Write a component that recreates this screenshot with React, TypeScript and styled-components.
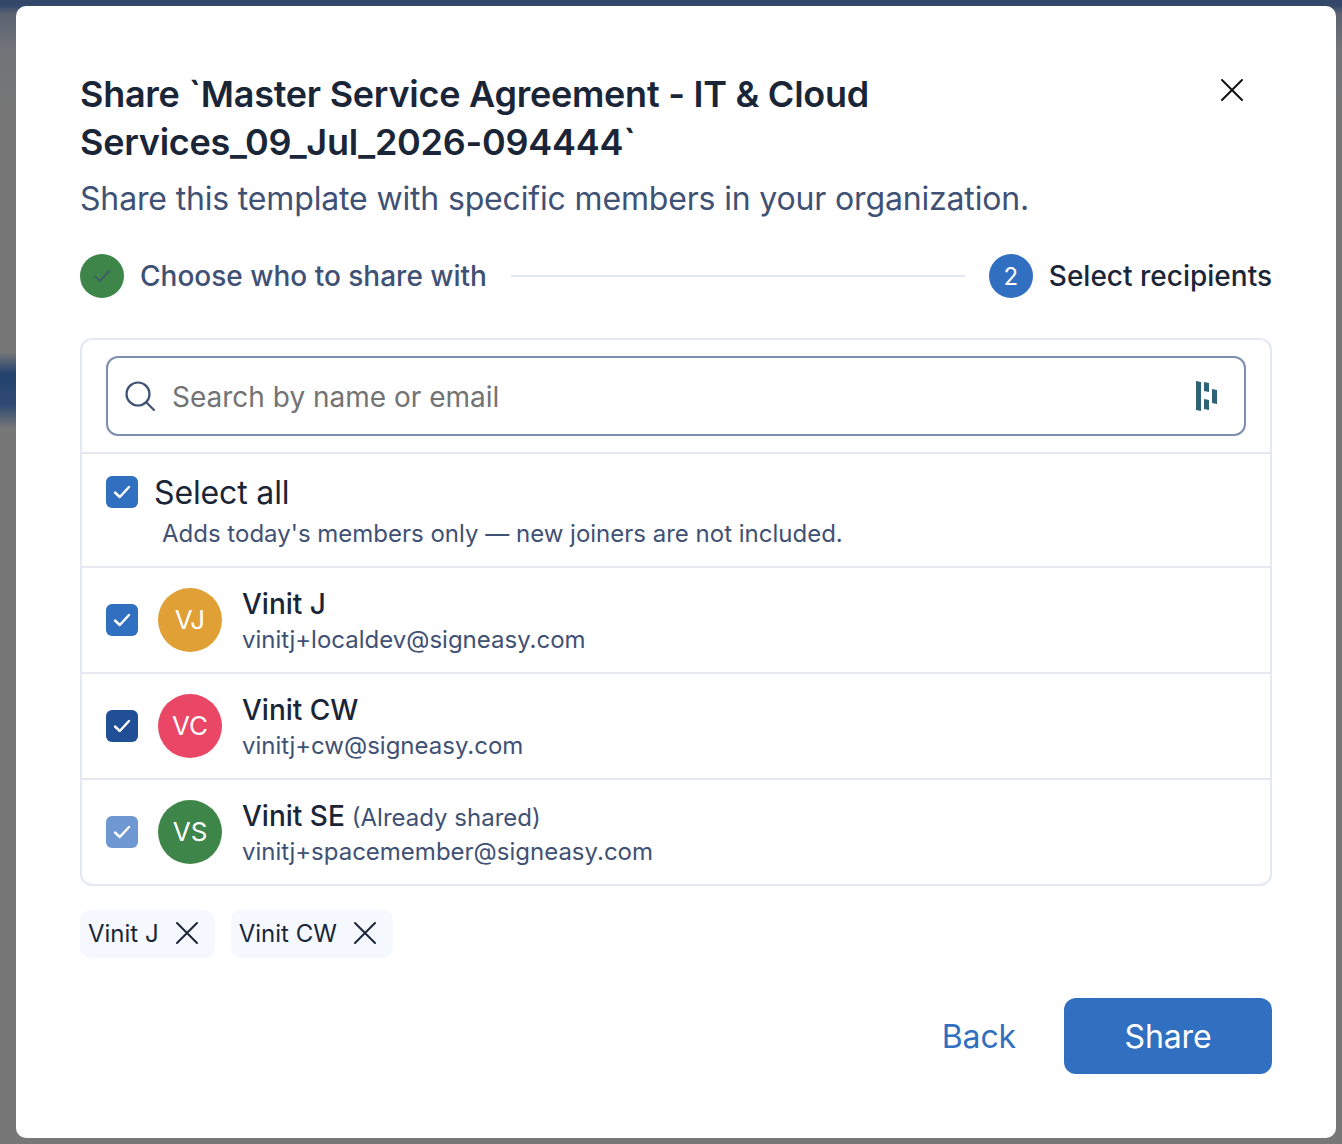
import React from "react";
import styled, { createGlobalStyle } from "styled-components";

const Global = createGlobalStyle`
  html, body { margin: 0; padding: 0; }
  body { font-family: Inter, "Liberation Sans", sans-serif; }
  * { box-sizing: border-box; }
`;

const Backdrop = styled.div`
  width: 1342px;
  height: 1144px;
  padding: 6px 6px 6px 16px;
  overflow: hidden;
  background-color: #777777;
  background-image:
    linear-gradient(180deg, #33476a 0, #33476a 5px, rgba(72, 86, 110, 0.6) 14px, rgba(100, 108, 120, 0.35) 50px, rgba(119, 119, 119, 0) 110px),
    linear-gradient(180deg, rgba(30, 60, 105, 0) 352px, #24426f 374px, #2f4b74 405px, rgba(30, 60, 105, 0) 428px);
  background-size: 100% 100%, 16px 100%;
  background-repeat: no-repeat;
`;

const Modal = styled.div`
  width: 1320px;
  height: 1132px;
  background: #ffffff;
  border-radius: 10px;
  padding: 64px;
  display: flex;
  flex-direction: column;
`;

const Header = styled.div`
  display: flex;
  justify-content: space-between;
  align-items: flex-start;
`;

const Title = styled.h2`
  margin: 0;
  width: 900px;
  font-size: 36px;
  line-height: 48px;
  font-weight: 600;
  letter-spacing: -0.26px;
  color: #1a2638;
`;

const Close = styled.button`
  margin: 6px 26px 0 0;
  padding: 0;
  width: 28px;
  height: 28px;
  border: 0;
  background: none;
  color: #111111;
  display: flex;
  align-items: center;
  justify-content: center;
`;

const Subtitle = styled.p`
  margin: 13px 0 0;
  font-size: 32px;
  line-height: 40px;
  letter-spacing: -0.16px;
  color: #3f5174;
`;

const Stepper = styled.div`
  margin-top: 35px;
  height: 44px;
  display: flex;
  align-items: center;
`;

const StepDot = styled.div<{ $bg: string }>`
  flex: none;
  width: 44px;
  height: 44px;
  border-radius: 50%;
  background: ${(p) => p.$bg};
  color: #ffffff;
  font-size: 24px;
  display: flex;
  align-items: center;
  justify-content: center;
`;

const StepLabel = styled.span<{ $active?: boolean }>`
  flex: none;
  margin-left: 16px;
  font-size: 28px;
  font-weight: 500;
  color: ${(p) => (p.$active ? "#1a2638" : "#3f5174")};
`;

const StepLine = styled.div`
  flex: 1;
  height: 2px;
  margin: 0 24px;
  background: #e4e8f1;
`;

const Panel = styled.div`
  margin-top: 40px;
  height: 548px;
  border: 2px solid #e4e8f1;
  border-radius: 12px;
  display: flex;
  flex-direction: column;
`;

const SearchWrap = styled.div`
  height: 114px;
  flex: none;
  padding: 16px 24px;
  border-bottom: 2px solid #e4e8f1;
`;

const SearchBox = styled.div`
  height: 80px;
  border: 2px solid #7d8fae;
  border-radius: 12px;
  padding: 0 26px 0 16px;
  display: flex;
  align-items: center;
`;

const Placeholder = styled.span`
  flex: 1;
  margin: 2px 0 0 16px;
  font-size: 28px;
  color: #737373;
`;

const SelectAll = styled.div`
  height: 114px;
  flex: none;
  padding: 21px 24px 0;
  border-bottom: 2px solid #e4e8f1;
`;

const SelectAllRow = styled.div`
  display: flex;
  align-items: center;
  height: 34px;
`;

const SelectAllLabel = styled.span`
  margin-left: 16px;
  font-size: 32px;
  letter-spacing: -0.14px;
  color: #1a2638;
`;

const Hint = styled.div`
  margin: 8px 0 0 56px;
  font-size: 24px;
  line-height: 34px;
  color: #3f5174;
`;

const Check = styled.span<{ $bg: string }>`
  flex: none;
  width: 32px;
  height: 32px;
  border-radius: 6px;
  background: ${(p) => p.$bg};
  display: flex;
  align-items: center;
  justify-content: center;
`;

const Row = styled.div<{ $last?: boolean }>`
  height: ${(p) => (p.$last ? "104px" : "106px")};
  flex: none;
  padding: 0 24px;
  display: flex;
  align-items: center;
  border-bottom: ${(p) => (p.$last ? "0" : "2px solid #e4e8f1")};
`;

const Avatar = styled.div<{ $bg: string }>`
  flex: none;
  margin-left: 20px;
  width: 64px;
  height: 64px;
  padding-bottom: 2px;
  border-radius: 50%;
  background: ${(p) => p.$bg};
  color: #ffffff;
  font-size: 26px;
  display: flex;
  align-items: center;
  justify-content: center;
`;

const Person = styled.div`
  margin: 4px 0 0 20px;
  display: flex;
  flex-direction: column;
`;

const Name = styled.div`
  font-size: 28px;
  line-height: 36px;
  font-weight: 500;
  color: #1a2638;
`;

const Note = styled.span`
  margin-left: 7px;
  font-size: 24px;
  line-height: 1;
  font-weight: 400;
  color: #3f5174;
`;

const Email = styled.div`
  font-size: 24px;
  line-height: 36px;
  color: #3f5174;
`;

const Chips = styled.div`
  margin-top: 24px;
  display: flex;
  gap: 16px;
`;

const Chip = styled.div`
  height: 48px;
  padding: 0 16px 2px 8px;
  border-radius: 10px;
  background: #f5f8fe;
  color: #1a2638;
  font-size: 24px;
  display: flex;
  align-items: center;
  gap: 16px;
`;

const Footer = styled.div`
  margin-top: 40px;
  display: flex;
  justify-content: flex-end;
  align-items: center;
`;

const BackButton = styled.button`
  border: 0;
  background: none;
  padding: 0;
  margin-right: 48px;
  font: inherit;
  font-size: 32px;
  letter-spacing: -0.14px;
  color: #3170c1;
`;

const ShareButton = styled.button`
  width: 208px;
  height: 76px;
  border: 0;
  border-radius: 12px;
  background: #3170c1;
  color: #ffffff;
  font: inherit;
  font-size: 32px;
  letter-spacing: -0.14px;
`;

const Tick = ({ color = "#ffffff", width = 2.4 }: { color?: string; width?: number }) => (
  <svg width="18" height="18" viewBox="0 0 18 18" fill="none">
    <path d="M2 9.5 6.8 14 16 4" stroke={color} strokeWidth={width} strokeLinecap="round" strokeLinejoin="round" />
  </svg>
);

const Cross = ({ size, width, color }: { size: number; width: number; color: string }) => (
  <svg width={size} height={size} viewBox="0 0 24 24" fill="none">
    <path d="M2 2 22 22M22 2 2 22" stroke={color} strokeWidth={width} strokeLinecap="round" />
  </svg>
);

const SearchIcon = () => (
  <svg width="32" height="32" viewBox="0 0 32 32" fill="none">
    <circle cx="14" cy="14" r="11.5" stroke="#3f5174" strokeWidth="2.2" />
    <path d="M22.5 22.5 30 30" stroke="#3f5174" strokeWidth="2.2" strokeLinecap="round" />
  </svg>
);

const BrandMark = () => (
  <svg width="22" height="30" viewBox="0 0 22 30" fill="#2d6375">
    <path d="M0 0 5 1V30L0 29Z" />
    <path d="M8 1 13 2V11L8 10Z" />
    <path d="M8 18 13 19V29L8 28Z" />
    <path d="M16 8 21 9V23L16 22Z" />
  </svg>
);

const people = [
  { initials: "VJ", name: "Vinit J", email: "vinitj+localdev@signeasy.com", color: "#e0a035", check: "#3170c1" },
  { initials: "VC", name: "Vinit CW", email: "vinitj+cw@signeasy.com", color: "#ea4665", check: "#214f96" },
  { initials: "VS", name: "Vinit SE", note: "(Already shared)", email: "vinitj+spacemember@signeasy.com", color: "#3e8549", check: "#6f98d3" },
];

export default function App() {
  return (
    <Backdrop>
      <Global />
      <Modal>
        <Header>
          <Title>
            Share `Master Service Agreement - IT &amp; Cloud Services_09_Jul_2026-094444`
          </Title>
          <Close aria-label="Close">
            <Cross size={24} width={2} color="#111111" />
          </Close>
        </Header>
        <Subtitle>Share this template with specific members in your organization.</Subtitle>
        <Stepper>
          <StepDot $bg="#3e8549">
            <Tick color="#3f5174" width={1.5} />
          </StepDot>
          <StepLabel>Choose who to share with</StepLabel>
          <StepLine />
          <StepDot $bg="#3170c1">2</StepDot>
          <StepLabel $active>Select recipients</StepLabel>
        </Stepper>
        <Panel>
          <SearchWrap>
            <SearchBox>
              <SearchIcon />
              <Placeholder>Search by name or email</Placeholder>
              <BrandMark />
            </SearchBox>
          </SearchWrap>
          <SelectAll>
            <SelectAllRow>
              <Check $bg="#3170c1">
                <Tick />
              </Check>
              <SelectAllLabel>Select all</SelectAllLabel>
            </SelectAllRow>
            <Hint>Adds today's members only — new joiners are not included.</Hint>
          </SelectAll>
          {people.map((p, i) => (
            <Row key={p.initials} $last={i === people.length - 1}>
              <Check $bg={p.check}>
                <Tick />
              </Check>
              <Avatar $bg={p.color}>{p.initials}</Avatar>
              <Person>
                <Name>
                  {p.name}
                  {p.note && <Note>{p.note}</Note>}
                </Name>
                <Email>{p.email}</Email>
              </Person>
            </Row>
          ))}
        </Panel>
        <Chips>
          <Chip>
            Vinit J
            <Cross size={24} width={2} color="#1a2638" />
          </Chip>
          <Chip>
            Vinit CW
            <Cross size={24} width={2} color="#1a2638" />
          </Chip>
        </Chips>
        <Footer>
          <BackButton>Back</BackButton>
          <ShareButton>Share</ShareButton>
        </Footer>
      </Modal>
    </Backdrop>
  );
}
